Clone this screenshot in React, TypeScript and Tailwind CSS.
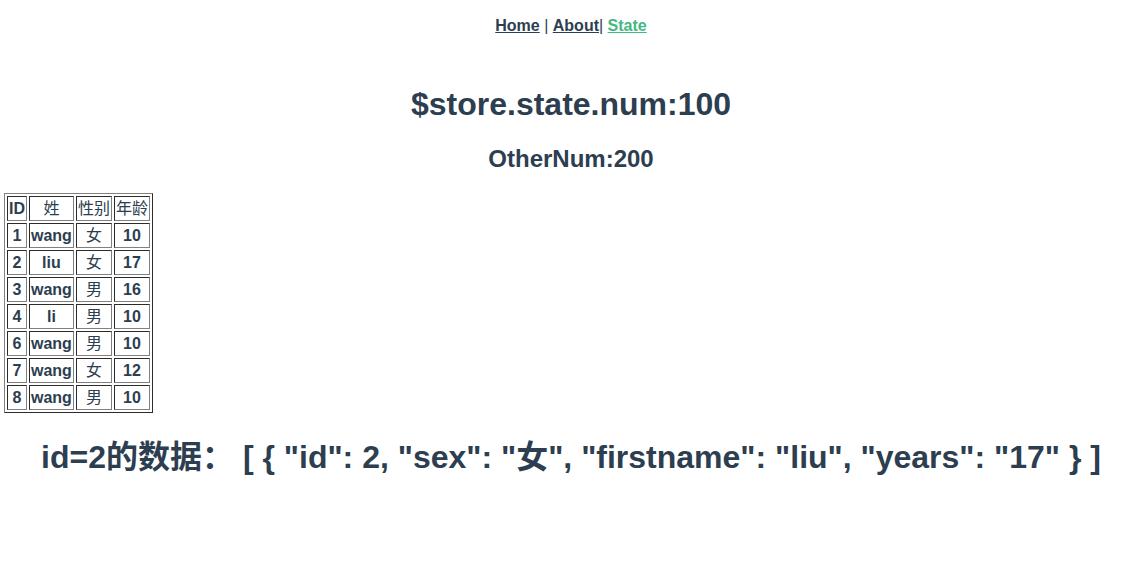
const rows = [
  { id: 1, firstname: 'wang', sex: '女', years: '10' },
  { id: 2, firstname: 'liu', sex: '女', years: '17' },
  { id: 3, firstname: 'wang', sex: '男', years: '16' },
  { id: 4, firstname: 'li', sex: '男', years: '10' },
  { id: 6, firstname: 'wang', sex: '男', years: '10' },
  { id: 7, firstname: 'wang', sex: '女', years: '12' },
  { id: 8, firstname: 'wang', sex: '男', years: '10' },
];

const cell = 'border border-[#808080] [border-style:inset] px-px py-px leading-[21px] font-bold';

export default function App() {
  const found = rows.filter((r) => r.id === 2);
  const text = found
    .map((r) => `{ "id": ${r.id}, "sex": "${r.sex}", "firstname": "${r.firstname}", "years": "${r.years}" }`)
    .join(', ');

  return (
    <div
      className="min-h-screen bg-white pl-2 text-center text-[#2c3e50]"
      style={{ fontFamily: '"Liberation Sans", Arial, "Noto Sans CJK SC", sans-serif' }}
    >
      <div className="pt-[17px] text-[16px] leading-[18px]">
        <a href="#" className="font-bold underline">Home</a> | <a href="#" className="font-bold underline">About</a>|{' '}
        <a href="#" className="font-bold text-[#42b983] underline">State</a>
      </div>

      <h1 className="mt-[51px] text-[32px] leading-[36px] font-bold">$store.state.num:100</h1>
      <h2 className="mt-[23px] text-[24px] leading-[27px] font-bold">OtherNum:200</h2>

      <table className="mt-[21px] -ml-1 border-separate border-spacing-[2px] border border-[#808080] [border-style:outset] text-[16px]">
        <tbody>
          <tr>
            <td className={cell}>ID</td>
            <td className={cell}><span className="font-normal">姓</span></td>
            <td className={cell}><span className="font-normal">性别</span></td>
            <td className={cell}><span className="font-normal">年龄</span></td>
          </tr>
          {rows.map((r) => (
            <tr key={r.id}>
              <td className={cell}>{r.id}</td>
              <td className={cell}>{r.firstname}</td>
              <td className={cell}><span className="font-normal">{r.sex}</span></td>
              <td className={cell}>{r.years}</td>
            </tr>
          ))}
        </tbody>
      </table>

      <div className="mt-[26px] text-[32px] leading-[36px] font-bold">
        id=2的数据： [ {text} ]
      </div>
    </div>
  );
}
